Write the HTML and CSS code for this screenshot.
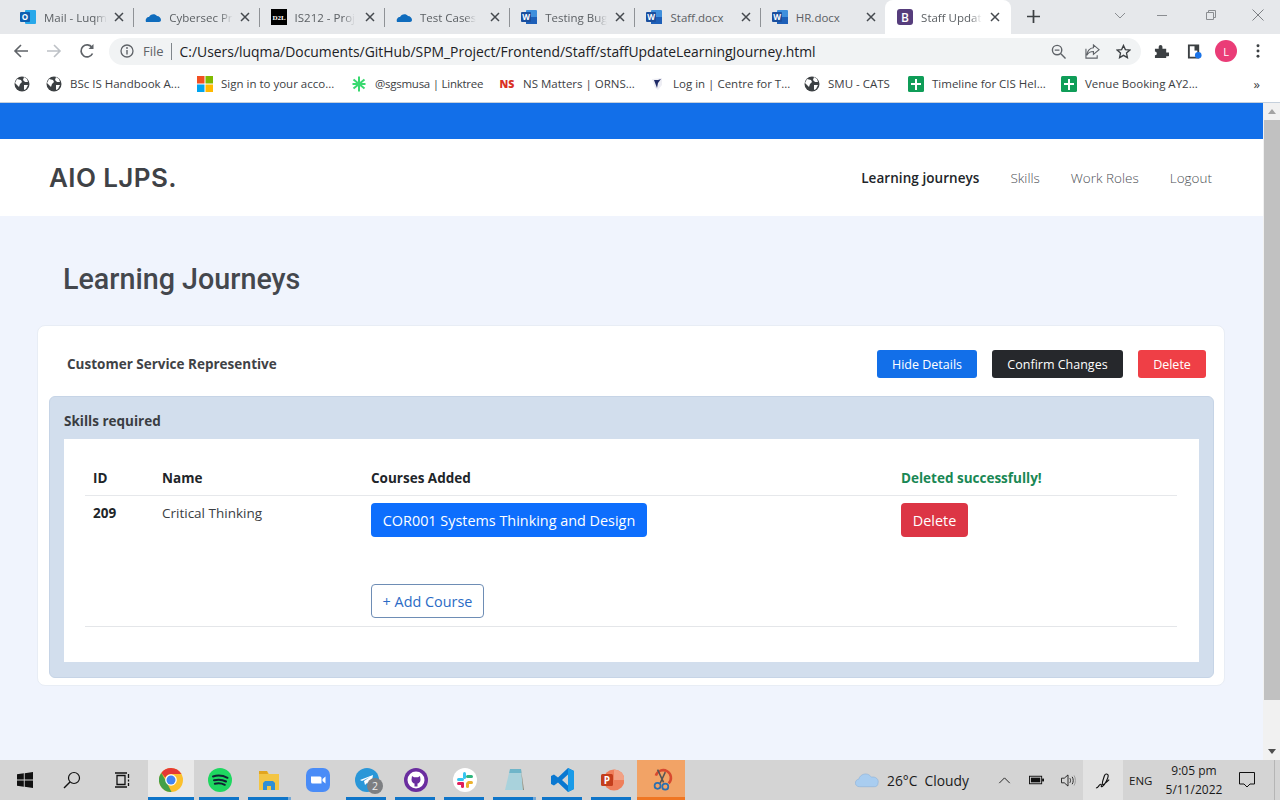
FILE: index.html
```html
<!DOCTYPE html>
<html lang="en">
<head>
<meta charset="utf-8">
<title>Staff Update Learning Journey</title>
<link rel="stylesheet" href="styles.css">
</head>
<body>
<svg class="defs" width="0" height="0" aria-hidden="true">
  <symbol id="i-word" viewBox="0 0 16 16"><rect x="5" y="1" width="11" height="14" rx="1" fill="#3f8fdc"/><rect x="5" y="8" width="11" height="7" fill="#1d5fb8"/><rect x="0" y="3" width="10" height="10" rx="1" fill="#1b4f9e"/><text x="5" y="11" font-size="8" font-weight="700" text-anchor="middle" fill="#fff" font-family="Open Sans">W</text></symbol>
  <symbol id="i-cloud" viewBox="0 0 16 16"><path d="M1 13c-1-3 1-5 3-5 1-3 6-4 8-1 2 0 4 2 4 4 0 1-1 2-2 2z" fill="#0f6cbd"/></symbol>
  <symbol id="i-close" viewBox="0 0 10 10"><path d="M1 1l8 8M9 1L1 9" stroke="#45494e" stroke-width="1.5" fill="none"/></symbol>
  <symbol id="i-globe" viewBox="0 0 16 16"><circle cx="8" cy="8" r="7.5" fill="#3c4043"/><path d="M3 3l4 1 1 2-2 2-1 3-2-2-2-2zM10 1l3 2 1 3-3 0-2-2zM10 9l4 0-2 4-2 1z" fill="#fff"/></symbol>
  <symbol id="i-sheets" viewBox="0 0 16 16"><rect width="16" height="16" rx="1.5" fill="#0f9d58"/><path d="M7 3h2v4h4v2H9v5H7V9H3V7h4z" fill="#fff"/></symbol>
</svg>

<header class="browser">
  <div class="tabstrip">
    <div class="tab">
      <svg class="fav" viewBox="0 0 16 16"><rect x="5" y="1" width="11" height="14" rx="1" fill="#28a8ea"/><rect x="0" y="3" width="10" height="10" rx="1" fill="#0f5fb0"/><text x="5" y="11" font-size="8" font-weight="700" text-anchor="middle" fill="#fff" font-family="Open Sans">O</text></svg>
      <span class="tab-title">Mail - Luqm</span>
      <svg class="tab-x"><use href="#i-close"/></svg>
    </div>
    <div class="tab"><svg class="fav"><use href="#i-cloud"/></svg><span class="tab-title">Cybersec Pr</span><svg class="tab-x"><use href="#i-close"/></svg></div>
    <div class="tab">
      <svg class="fav" viewBox="0 0 16 16"><rect width="16" height="16" fill="#000"/><text x="8" y="11" font-size="7" font-weight="700" text-anchor="middle" fill="#fff" font-family="Liberation Serif">D2L</text></svg>
      <span class="tab-title">IS212 - Proj</span><svg class="tab-x"><use href="#i-close"/></svg>
    </div>
    <div class="tab"><svg class="fav"><use href="#i-cloud"/></svg><span class="tab-title">Test Cases</span><svg class="tab-x"><use href="#i-close"/></svg></div>
    <div class="tab"><svg class="fav"><use href="#i-word"/></svg><span class="tab-title">Testing Bug</span><svg class="tab-x"><use href="#i-close"/></svg></div>
    <div class="tab"><svg class="fav"><use href="#i-word"/></svg><span class="tab-title plain">Staff.docx</span><svg class="tab-x"><use href="#i-close"/></svg></div>
    <div class="tab tab-last"><svg class="fav"><use href="#i-word"/></svg><span class="tab-title plain">HR.docx</span><svg class="tab-x"><use href="#i-close"/></svg></div>
    <div class="tab tab-active">
      <svg class="fav" viewBox="0 0 16 16"><rect width="16" height="16" rx="3" fill="#563d7c"/><text x="8" y="12.5" font-size="12" font-weight="600" text-anchor="middle" fill="#fff" font-family="Open Sans">B</text></svg>
      <span class="tab-title">Staff Updat</span><svg class="tab-x"><use href="#i-close"/></svg>
    </div>
    <svg class="newtab" viewBox="0 0 12 12"><path d="M6 0v12M0 6h12" stroke="#3c4043" stroke-width="1.6"/></svg>
    <div class="winctl">
      <svg class="win-chev" viewBox="0 0 12 7"><path d="M1 1l5 5 5-5" stroke="#8a8d91" fill="none"/></svg>
      <svg class="win-min" viewBox="0 0 10 1"><path d="M0 .5h10" stroke="#8a8d91"/></svg>
      <svg class="win-max" viewBox="0 0 10 10"><path d="M2.5 2V.5h7v7H8M.5 2.5h7v7h-7z" stroke="#8a8d91" fill="none"/></svg>
      <svg class="win-x" viewBox="0 0 12 12"><path d="M.5.5l11 11M11.500.5l-11 11" stroke="#7d8084" fill="none"/></svg>
    </div>
  </div>

  <div class="toolbar">
    <svg class="nav-ic" viewBox="0 0 16 16"><path d="M15 8H2M8 2L2 8l6 6" stroke="#5f6368" stroke-width="1.6" fill="none"/></svg>
    <svg class="nav-ic" viewBox="0 0 16 16"><path d="M1 8h13M8 2l6 6-6 6" stroke="#bdc1c6" stroke-width="1.6" fill="none"/></svg>
    <svg class="nav-ic" viewBox="0 0 16 16"><path d="M13.500 10.500A6 6 0 1 1 13 4.500" stroke="#5f6368" stroke-width="1.700" fill="none"/><path d="M14.500 1v5h-5z" fill="#5f6368"/></svg>
    <div class="omnibox">
      <svg class="info" viewBox="0 0 14 14"><circle cx="7" cy="7" r="6" stroke="#5f6368" stroke-width="1.300" fill="none"/><path d="M7 6v4.500" stroke="#5f6368" stroke-width="1.400"/><circle cx="7" cy="4" r=".9" fill="#5f6368"/></svg>
      <span class="scheme">File</span>
      <span class="url">C:/Users/luqma/Documents/GitHub/SPM_Project/Frontend/Staff/staffUpdateLearningJourney.html</span>
      <div class="omni-actions">
        <svg class="omni-zoom" viewBox="0 0 16 16"><circle cx="6.500" cy="6.500" r="5" stroke="#5f6368" stroke-width="1.500" fill="none"/><path d="M10.500 10.500l5 5M4 6.500h5" stroke="#5f6368" stroke-width="1.500"/></svg>
        <svg viewBox="0 0 16 16"><path d="M9 4V1l6 5-6 5V8C5 8 3 10 2 12c0-4 3-8 7-8zM1 5v10h12v-3" stroke="#5f6368" stroke-width="1.200" fill="none"/></svg>
        <svg viewBox="0 0 16 16"><path d="M8 1.500l2 4.500 4.800.5-3.600 3.200 1 4.800L8 12.100l-4.200 2.400 1-4.800L1.200 6.500 6 6z" stroke="#3c4043" stroke-width="1.400" fill="none"/></svg>
      </div>
    </div>
    <div class="tool-actions">
      <svg viewBox="0 0 16 16"><path d="M1 5h4V3a2 2 0 0 1 4 0v2h4v4h2a2 2 0 0 1 0 4h-2v2H1v-3a2 2 0 0 0 0-4z" fill="#3c4043"/></svg>
      <svg viewBox="0 0 16 16"><path d="M2 1.500h10v13H2z" stroke="#3c4043" stroke-width="2" fill="#fff"/><path d="M8 2h4v5H8z" fill="#3c4043"/><circle cx="12" cy="12" r="3.500" fill="#1a73e8"/></svg>
      <span class="avatar">L</span>
      <svg class="dots" viewBox="0 0 4 16"><circle cx="2" cy="2" r="1.700" fill="#3c4043"/><circle cx="2" cy="8" r="1.700" fill="#3c4043"/><circle cx="2" cy="14" r="1.700" fill="#3c4043"/></svg>
    </div>
  </div>

  <div class="bookmarks">
    <div class="bm"><svg class="fav"><use href="#i-globe"/></svg></div>
    <div class="bm"><svg class="fav"><use href="#i-globe"/></svg><span>BSc IS Handbook A...</span></div>
    <div class="bm">
      <svg class="fav" viewBox="0 0 16 16"><rect width="7.500" height="7.500" fill="#f25022"/><rect x="8.500" width="7.500" height="7.500" fill="#7fba00"/><rect y="8.500" width="7.500" height="7.500" fill="#00a4ef"/><rect x="8.500" y="8.500" width="7.500" height="7.500" fill="#ffb900"/></svg>
      <span>Sign in to your acco...</span>
    </div>
    <div class="bm">
      <svg class="fav" viewBox="0 0 16 16"><path d="M8 .5v15M2.500 3.500l11 9M13.500 3.500l-11 9M1.500 8h13" stroke="#39d96f" stroke-width="2"/></svg>
      <span class="bm-tight">@sgsmusa | Linktree</span>
    </div>
    <div class="bm"><span class="ns">NS</span><span>NS Matters | ORNS...</span></div>
    <div class="bm">
      <svg class="fav" viewBox="0 0 16 16"><path d="M3 3l10-1v7l-4 5-3-2z" fill="#eeeef4"/><path d="M5 4l3 8 1-5 3-4-3 1z" fill="#1f2a66"/></svg>
      <span>Log in | Centre for T...</span>
    </div>
    <div class="bm"><svg class="fav"><use href="#i-globe"/></svg><span>SMU - CATS</span></div>
    <div class="bm"><svg class="fav"><use href="#i-sheets"/></svg><span>Timeline for CIS Hel...</span></div>
    <div class="bm"><svg class="fav"><use href="#i-sheets"/></svg><span>Venue Booking AY2...</span></div>
    <span class="bm-more">»</span>
  </div>
</header>

<div class="viewport">
  <main class="page">
    <div class="topbar"></div>
    <nav class="sitenav">
      <a class="brand">AIO LJPS.</a>
      <div class="navlinks">
        <a class="navlink active">Learning journeys</a>
        <a class="navlink">Skills</a>
        <a class="navlink">Work Roles</a>
        <a class="navlink">Logout</a>
      </div>
    </nav>
    <h1 class="page-title">Learning Journeys</h1>
    <section class="card">
      <div class="card-head">
        <h2 class="role">Customer Service Representive</h2>
        <div class="card-actions">
          <button class="btn btn-sm btn-blue">Hide Details</button>
          <button class="btn btn-sm btn-dark">Confirm Changes</button>
          <button class="btn btn-sm btn-red">Delete</button>
        </div>
      </div>
      <div class="panel">
        <h3 class="panel-title">Skills required</h3>
        <div class="panel-body">
          <table class="skills">
            <colgroup><col class="c-id"><col class="c-name"><col class="c-course"><col class="c-act"></colgroup>
            <thead>
              <tr><th>ID</th><th>Name</th><th>Courses Added</th><th class="ok">Deleted successfully!</th></tr>
            </thead>
            <tbody>
              <tr>
                <th>209</th>
                <td>Critical Thinking</td>
                <td>
                  <button class="btn btn-lg btn-course">COR001 Systems Thinking and Design</button>
                  <button class="btn btn-lg btn-outline">+ Add Course</button>
                </td>
                <td><button class="btn btn-lg btn-danger">Delete</button></td>
              </tr>
            </tbody>
          </table>
        </div>
      </div>
    </section>
  </main>
  <div class="scrollbar">
    <svg class="sb-arrow" viewBox="0 0 8 5"><path d="M4 0l4 5H0z" fill="#a3a3a3"/></svg>
    <div class="sb-thumb"></div>
    <svg class="sb-arrow sb-down" viewBox="0 0 8 5"><path d="M0 0h8L4 5z" fill="#505050"/></svg>
  </div>
</div>

<footer class="taskbar">
  <div class="tb-cell tb-start"><svg viewBox="0 0 16 16"><path d="M0 2.300l6.800-1v6.300H0zM7.700 1.200L16 0v7.600H7.700zM0 8.500h6.800v6.300l-6.800-1zM7.700 8.500H16V16l-8.300-1.200z" fill="#111"/></svg></div>
  <div class="tb-cell"><svg viewBox="0 0 18 18"><circle cx="11" cy="7" r="5.500" stroke="#111" stroke-width="1.200" fill="none"/><path d="M7 11l-6 6" stroke="#111" stroke-width="1.400"/></svg></div>
  <div class="tb-cell tb-view"><svg viewBox="0 0 16 16"><path d="M3 3.500h8v9H3z" stroke="#111" stroke-width="1.300" fill="none"/><path d="M1 1h12M1 15h12M14.500 2v4M14.500 7.500v2M14.500 11v3" stroke="#111" stroke-width="1.300"/></svg></div>
  <div class="tb-cell tb-app tb-open tb-chrome">
    <svg viewBox="0 0 24 24"><circle cx="12" cy="12" r="12" fill="#fbc02d"/><path d="M12 0a12 12 0 0 1 10.400 6H12a6 6 0 0 0-5.600 3.700L2.300 5A12 12 0 0 1 12 0z" fill="#e53935"/><path d="M2.300 5l5 8.500L12.500 24A12 12 0 0 1 2.300 5z" fill="#43a047"/><circle cx="12" cy="12" r="5.800" fill="#fff"/><circle cx="12" cy="12" r="4.500" fill="#4285f4"/></svg>
  </div>
  <div class="tb-cell tb-app tb-open">
    <svg viewBox="0 0 24 24"><circle cx="12" cy="12" r="12" fill="#1ed760"/><path d="M5 8.500c5-1.500 10-1 14.500 1.300M6 12.300c4-1 8.500-.7 12 1.200M6.800 15.800c3.500-.8 7-.5 10 1" stroke="#123" stroke-width="2" fill="none" stroke-linecap="round"/></svg>
  </div>
  <div class="tb-cell tb-app tb-open tb-stack">
    <svg viewBox="0 0 24 24"><path d="M2 3h8l2 3h10v16H2z" fill="#f3c544"/><path d="M2 3h8l1 3H2z" fill="#e2a51f"/><path d="M8 13h8l2 2v7h-4v-4h-4v4H6v-7z" fill="#2f8fd6"/></svg>
  </div>
  <div class="tb-cell tb-app">
    <svg viewBox="0 0 24 24"><rect width="24" height="24" rx="7" fill="#4a8cf7"/><path d="M5 8.500h9a1.500 1.500 0 0 1 1.500 1.500v5.500h-9A1.500 1.500 0 0 1 5 14zM16.500 11l3-2.500v7l-3-2.500z" fill="#fff"/></svg>
  </div>
  <div class="tb-cell tb-app tb-open tb-badged">
    <svg viewBox="0 0 24 24"><circle cx="12" cy="12" r="12" fill="#2a97d8"/><path d="M5 12l13-5-2 11-4-3-2 2-1-4 6-4-8 4z" fill="#fff"/></svg>
    <span class="tb-badge">2</span>
  </div>
  <div class="tb-cell tb-app tb-open">
    <svg viewBox="0 0 24 24"><circle cx="12" cy="12" r="12" fill="#6a2d9f"/><circle cx="12" cy="12" r="8.500" fill="#fff"/><path d="M8 8l2 1.200h4L16 8l.5 3.500c0 2.500-1.500 3.800-3 4v3h-3v-3c-1.500-.2-3-1.500-3-4z" fill="#6a2d9f"/></svg>
  </div>
  <div class="tb-cell tb-app tb-open">
    <svg viewBox="0 0 24 24"><circle cx="12" cy="12" r="12" fill="#fff"/><rect x="10" y="4" width="3" height="7" rx="1.500" fill="#36c5f0"/><rect x="4" y="10" width="7" height="3" rx="1.500" fill="#36c5f0"/><rect x="13" y="7" width="7" height="3" rx="1.500" fill="#2eb67d"/><rect x="14" y="13" width="6" height="3" rx="1.500" fill="#ecb22e"/><rect x="13" y="14" width="3" height="6" rx="1.500" fill="#ecb22e"/><rect x="8" y="14" width="3" height="6" rx="1.500" fill="#e01e5a"/><rect x="4" y="14" width="7" height="3" rx="1.500" fill="#e01e5a"/></svg>
  </div>
  <div class="tb-cell tb-app tb-open tb-stack">
    <svg viewBox="0 0 24 24"><path d="M8 1h11l2 21H3z" fill="#a9d2dc"/><path d="M8 1h11l.4 4H7.200z" fill="#6fb5c9"/><path d="M19 1l3 21h-1z" fill="#8c8c7c"/></svg>
  </div>
  <div class="tb-cell tb-app tb-open">
    <svg viewBox="0 0 24 24"><path d="M17 0l6 3v18l-6 3-10-9.500-4 3L0 16V8l3-1.500 4 3zM17 6.500l-6 5.500 6 5.500z" fill="#0a78d1"/><path d="M17 0l6 3v18l-6 3z" fill="#1a9be8"/></svg>
  </div>
  <div class="tb-cell tb-app tb-open">
    <svg viewBox="0 0 24 24"><circle cx="14" cy="12" r="10.500" fill="#ef7f5b"/><path d="M14 1.500a10.500 10.500 0 0 1 10.500 10.500H14z" fill="#f2a184"/><rect x="1" y="6" width="12" height="12" rx="1.500" fill="#c43e1c"/><text x="7" y="15.500" font-size="10" font-weight="700" text-anchor="middle" fill="#fff" font-family="Open Sans">P</text></svg>
  </div>
  <div class="tb-cell tb-snip">
    <svg viewBox="0 0 24 28"><path d="M6 10A9 9 0 1 1 21 19" stroke="#d8492f" stroke-width="3" fill="none"/><path d="M8 3l7 15M17 6l-6 13" stroke="#555" stroke-width="1.800"/><circle cx="8" cy="22" r="3.500" stroke="#2a6fb0" stroke-width="2" fill="none"/><circle cx="17" cy="23" r="3.500" stroke="#2a6fb0" stroke-width="2" fill="none"/></svg>
  </div>

  <div class="tray">
    <div class="weather">
      <svg viewBox="0 0 26 16"><path d="M5 15c-6 0-6-7-1-8 1-5 9-8 13-2 5-1 8 3 7 6 0 3-2 4-4 4z" fill="#a9cdf0" stroke="#8ab0d8" stroke-width=".6"/></svg>
      <span>26°C&nbsp; Cloudy</span>
    </div>
    <svg class="tray-chev" viewBox="0 0 14 8"><path d="M1 7l6-6 6 6" stroke="#222" stroke-width="1.100" fill="none"/></svg>
    <svg class="tray-batt" viewBox="0 0 16 10"><rect x=".5" y="1" width="13" height="8" stroke="#111" fill="none"/><rect x="2" y="2.500" width="10" height="5" fill="#111"/><rect x="14" y="3.500" width="2" height="3" fill="#111"/></svg>
    <svg class="tray-vol" viewBox="0 0 16 14"><path d="M1 4.500h3L8 1v12L4 9.500H1z" stroke="#222" fill="none"/><path d="M10 4.500c1 1.500 1 3.500 0 5M12.500 3c1.500 2.500 1.500 5.500 0 8" stroke="#222" fill="none"/><path d="M14.500 1.500c2 3.500 2 7.500 0 11" stroke="#999" fill="none"/></svg>
    <div class="tray-pen"><svg viewBox="0 0 18 18"><path d="M1 17c3 0 3-4 5-4s-1 4 2 2 6-9 6-11-3-3-4 0-3 8-2 9 4-2 7-5" stroke="#111" stroke-width="1.200" fill="none"/></svg></div>
    <span class="tray-lang">ENG</span>
    <div class="clock"><span>9:05 pm</span><span>5/11/2022</span></div>
    <svg class="tray-note" viewBox="0 0 16 16"><path d="M.5.500h15v11.500h-4.500L8 15l-3-3H.5z" stroke="#111" fill="none"/></svg>
    <span class="tray-desk"></span>
  </div>
</footer>
</body>
</html>
```

FILE: styles.css
```css
* { box-sizing: border-box; }
html, body { margin: 0; height: 800px; overflow: hidden; }
body {
  display: flex;
  flex-direction: column;
  width: 1280px;
  font-family: "Open Sans", "Liberation Sans", sans-serif;
  color: #212529;
  background: #fff;
}
.defs { position: absolute; }

/* Browser chrome */
.browser { flex: none; height: 103px; display: flex; flex-direction: column; background: #fff; border-bottom: 1px solid #c5d0dc; }
.tabstrip { height: 34px; padding-left: 9px; display: flex; background: #e6e8eb; }
.tab {
  width: 125.3px;
  height: 34px;
  padding: 0 10px 0 11px;
  display: flex;
  align-items: center;
  position: relative;
  font-size: 11.5px;
  color: #5c6064;
}
.tab::after { content: ""; position: absolute; right: 0; top: 8px; bottom: 7px; width: 1px; background: #8f9296; }
.tab-last::after, .tab-active::after { display: none; }
.tab-active { width: 126px; margin-left: -1.5px; padding: 0 11px 0 12.5px; background: #fff; border-radius: 8px 8px 0 0; }
.fav { width: 16px; height: 16px; flex: none; }
.tab-title {
  margin-left: 8px;
  white-space: nowrap;
  -webkit-mask-image: linear-gradient(to right, #000 80%, transparent);
  mask-image: linear-gradient(to right, #000 80%, transparent);
}
.tab-title.plain { -webkit-mask-image: none; mask-image: none; }
.tab-x { width: 10px; height: 10px; margin-left: auto; flex: none; }
.newtab { width: 13px; height: 13px; margin: 10px 0 0 16px; flex: none; }
.winctl { margin-left: 74px; display: flex; height: 30px; align-items: center; }
.win-chev { width: 12px; height: 7px; }
.win-min { width: 10px; height: 1px; margin-left: 31px; }
.win-max { width: 10px; height: 10px; margin-left: 39px; }
.win-x { width: 12px; height: 12px; margin-left: 36px; }

.toolbar { height: 34px; padding-left: 13px; display: flex; align-items: center; background: #fff; }
.nav-ic { width: 16px; height: 16px; margin-right: 17px; flex: none; }
.nav-ic:nth-of-type(3) { margin-right: 14px; }
.omnibox {
  width: 1032px;
  height: 27px;
  padding-left: 11px;
  display: flex;
  align-items: center;
  background: #f1f3f4;
  border-radius: 14px;
  font-size: 13px;
}
.info { width: 14px; height: 14px; flex: none; }
.scheme { margin-left: 9px; padding-right: 7px; border-right: 1px solid #80868b; color: #5f6368; line-height: 17px; font-size: 13px; }
.url { margin-left: 8px; color: #202124; white-space: nowrap; font-size: 13.9px; }
.omni-actions { margin-left: auto; display: flex; align-items: center; gap: 16px; padding-right: 10px; }
.omni-actions svg { width: 15px; height: 15px; flex: none; }
.omni-actions .omni-zoom { margin-right: 3px; }
.tool-actions { display: flex; align-items: center; margin-left: 13px; }
.tool-actions svg { width: 15px; height: 15px; flex: none; margin-right: 18px; }
.tool-actions .dots { width: 4px; height: 14px; margin: 0 0 0 19px; }
.avatar {
  width: 22px; height: 22px; margin-left: -5px;
  display: flex; align-items: center; justify-content: center;
  border-radius: 50%;
  background: #ea3c77;
  color: #fff;
  font-size: 11px;
}

.bookmarks {
  height: 33px;
  padding: 0 0 2px 14px;
  display: grid;
  grid-template-columns: 32px 151px 154px 148px 150px 155px 104px 153px 150px 49px;
  align-items: center;
  font-size: 11.5px;
  color: #3c4043;
}
.bm { display: flex; align-items: center; gap: 8px; white-space: nowrap; }
.bm-tight { letter-spacing: -.26px; }
.ns { width: 16px; flex: none; color: #d93025; font-weight: 800; font-size: 10.5px; text-align: center; }
.bm-more { font-size: 13px; text-align: right; }

/* Page */
.viewport { flex: none; height: 657px; display: flex; background: #f0f4fd; overflow: hidden; }
.page { width: 1263px; flex: none; }
.topbar { height: 36px; background: #126fe9; }
.sitenav {
  height: 77px;
  padding: 0 51px 0 49px;
  display: flex;
  align-items: center;
  justify-content: space-between;
  background: #fff;
}
.brand { font-family: Inter, Roboto, sans-serif; font-size: 26px; font-weight: 600; letter-spacing: .4px; color: #3f4246; }
.navlinks { display: flex; gap: 31px; font-size: 13.5px; }
.navlink { color: #4d5156; font-weight: 300; }
.navlink.active { color: #212529; font-weight: 600; letter-spacing: .06px; }
.page-title { margin: 45px 0 28px 63px; font-family: Roboto, sans-serif; font-size: 28.7px; font-weight: 500; line-height: 36px; color: #44474d; }
.card {
  width: 1188px;
  height: 361px;
  margin-left: 37px;
  padding: 0 11px;
  background: #fff;
  border: 1px solid #e8edf5;
  border-radius: 8px;
}
.card-head { height: 70px; padding: 6px 7px 0 18px; display: flex; align-items: center; justify-content: space-between; }
.role { margin: 0; font-size: 13.5px; font-weight: 700; color: #3f4246; }
.card-actions { display: flex; gap: 15px; }
.btn { display: block; border: 1px solid transparent; font-family: inherit; color: #fff; padding: 0; text-align: center; white-space: nowrap; }
.btn-sm { height: 28px; border-radius: 3px; font-size: 12.5px; }
.btn-blue { width: 100px; background: #126fe9; }
.btn-dark { width: 131px; background: #26282c; }
.btn-red { width: 68px; background: #ef3f46; }
.panel {
  width: 1165px;
  height: 282px;
  padding: 0 14px;
  background: #d2deed;
  border: 1px solid #c6d4e6;
  border-radius: 6px;
}
.panel-title { margin: 0; height: 42px; line-height: 48px; font-size: 13.500px; font-weight: 700; color: #3a3d42; }
.panel-body { height: 223px; padding: 20px 21px 0; background: #fff; }
.skills { width: 1092px; table-layout: fixed; border-collapse: collapse; font-size: 13.500px; }
.c-id { width: 69px; }
.c-name { width: 209px; }
.c-course { width: 530px; }
.c-act { width: 284px; }
.skills th, .skills td { padding: 8px; text-align: left; vertical-align: top; font-weight: 400; }
.skills th { font-weight: 700; }
.skills thead th { height: 36px; padding: 10px 8px 6px; border-bottom: 1px solid #e6e8eb; }
.skills tbody tr { border-bottom: 1.500px solid #e4e6e9; }
.skills .ok { color: #198754; }
.skills td:nth-child(2) { color: #3a3d42; }
.btn-lg { height: 34px; padding-top: 2px; border-radius: 4px; font-size: 14.400px; }
.btn-course { width: 276px; margin-top: -1px; background: #0d6efd; }
.btn-outline { width: 113px; margin-top: 47px; background: #fff; border-color: #6e8db5; color: #2a6bc5; }
.btn-danger { width: 67px; margin-top: -1px; background: #dc3545; }

.scrollbar { width: 17px; flex: none; display: flex; flex-direction: column; align-items: center; background: #f1f1f1; padding: 6px 0 6px 1px; }
.sb-arrow { width: 8px; height: 5px; flex: none; }
.sb-thumb { width: 16px; height: 580px; margin-top: 6px; background: #c1c1c1; flex: none; }
.sb-down { margin-top: auto; }

/* Taskbar */
.taskbar { flex: none; height: 40px; display: flex; background: #d4d4d4; font-size: 14px; color: #1a1a1a; }
.tb-cell { width: 49px; flex: none; display: flex; align-items: center; justify-content: center; position: relative; }
.tb-cell svg { width: 24px; height: 24px; }
.tb-start { width: 47px; padding-left: 2px; }
.tb-start svg { width: 16px; height: 16px; }
.tb-cell:nth-child(2) svg { width: 18px; height: 18px; }
.tb-view { width: 52px; }
.tb-view svg { width: 16px; height: 16px; }
.tb-chrome { width: 46px; background: #e9e9e9; margin-right: 1px; }
.tb-open::after { content: ""; position: absolute; left: 4px; right: 5px; bottom: 0; height: 3px; background: #0f75c9; }
.tb-chrome::after { left: 0; right: 0; }
.tb-stack::before { content: ""; position: absolute; left: 4px; right: 2px; bottom: 0; height: 3px; background: #74a8d6; }
.tb-snip { width: 48px; background: #f2a366; border-bottom: 3px solid #f07622; margin-left: 1px; }
.tb-badge {
  position: absolute;
  left: 25px; top: 18px;
  width: 16px; height: 16px;
  border-radius: 50%;
  background: #7d7f82;
  color: #eee;
  font-size: 10.500px;
  line-height: 16px;
  text-align: center;
}
.tray { margin-left: auto; display: flex; align-items: center; height: 40px; }
.weather { display: flex; align-items: center; gap: 7px; font-size: 13.800px; width: 124px; white-space: nowrap; }
.weather svg { width: 25px; height: 16px; flex: none; }
.tray-chev { width: 13px; height: 7px; margin-left: 19px; }
.tray-batt { width: 15px; height: 10px; margin-left: 18px; }
.tray-vol { width: 16px; height: 13px; margin-left: 16px; }
.tray-pen { width: 40px; height: 40px; margin-left: 7px; background: #e2e2e2; display: flex; align-items: center; justify-content: center; }
.tray-pen svg { width: 17px; height: 17px; }
.tray-lang { margin-left: 6px; width: 28px; font-size: 11.500px; }
.clock { width: 72px; margin-left: 1px; display: flex; flex-direction: column; align-items: center; gap: 3px; font-size: 12px; line-height: 16px; }
.tray-note { width: 16px; height: 16px; margin-left: 9px; }
.tray-desk { width: 1px; height: 40px; margin-left: 19px; margin-right: 5px; background: #b5b5b5; }
```
